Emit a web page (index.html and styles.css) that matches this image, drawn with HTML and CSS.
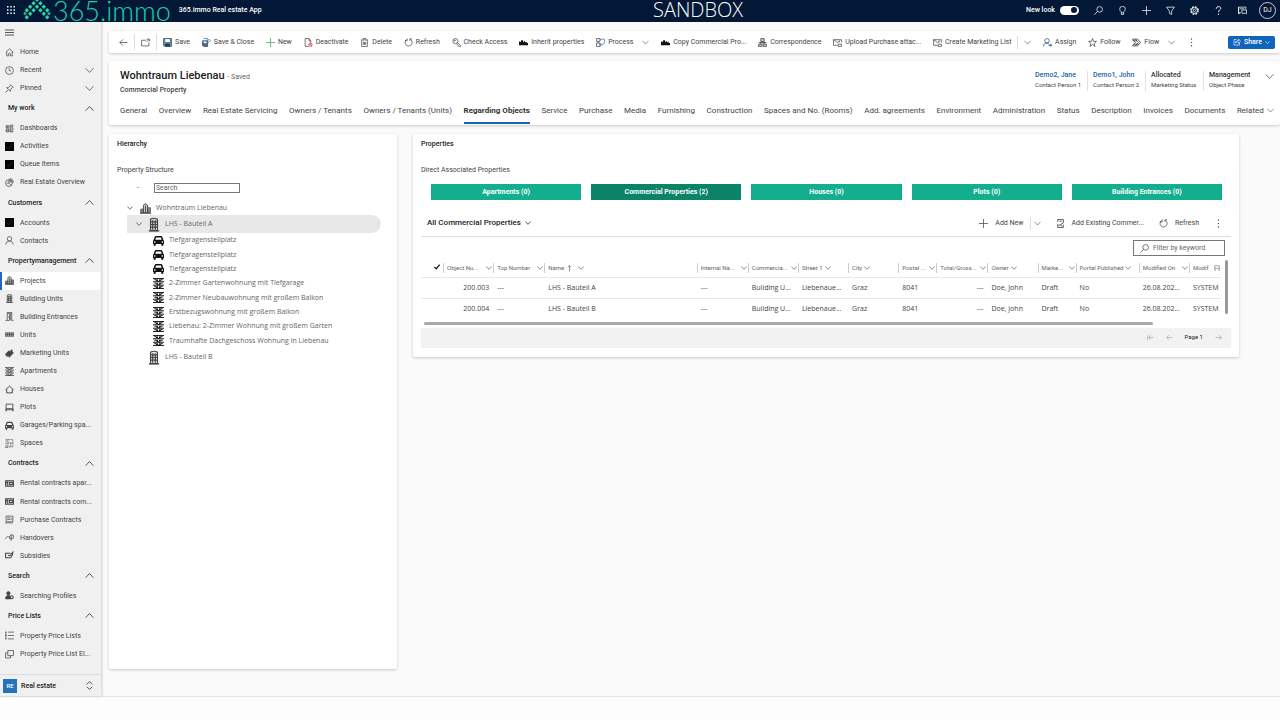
FILE: index.html
```html
<!DOCTYPE html>
<html lang="en">
<head>
<meta charset="utf-8">
<title>365.immo Real estate App</title>
<link rel="stylesheet" href="styles.css">
</head>
<body>
<svg class="sprite" aria-hidden="true">
  <symbol id="waffle" viewBox="0 0 16 16"><g fill="currentColor" stroke="none"><path d="M0 0h3v3H0zM6.500 0h3v3h-3zM13 0h3v3h-3zM0 6.500h3v3H0zM6.500 6.500h3v3h-3zM13 6.500h3v3h-3zM0 13h3v3H0zM6.500 13h3v3h-3zM13 13h3v3h-3z"/></g></symbol>
  <symbol id="menu" viewBox="0 0 16 16"><path d="M0 3.500h16M0 8h16M0 12.500h16"/></symbol>
  <symbol id="home" viewBox="0 0 16 16"><path d="M1.500 7.500 8 1.500l6.500 6M3 6.500V14h3.500v-3.500a1.500 1.500 0 0 1 3 0V14H13V6.500"/></symbol>
  <symbol id="clock" viewBox="0 0 16 16"><circle cx="8" cy="8" r="7"/><path d="M7.500 3.500v5h3.500"/></symbol>
  <symbol id="pin" viewBox="0 0 16 16"><path d="m10 1.500 4.500 4.500-1.500.500-3 3-.500 3.500-6.500-6.500 3.500-.500 3-3zM5.500 10.500l-4.500 4.500"/></symbol>
  <symbol id="down" viewBox="0 0 16 16"><path d="m1 4 7 7.500L15 4"/></symbol>
  <symbol id="up" viewBox="0 0 16 16"><path d="m1 12 7-7.500 7 7.500"/></symbol>
  <symbol id="updown" viewBox="0 0 16 16"><path d="m3 6 5-5 5 5M3 10l5 5 5-5"/></symbol>
  <symbol id="dash" viewBox="0 0 16 16"><path d="M2 3h5v4H2zM9 2h5v3H9zM9 7h5v7H9zM2 9h5v5H2zM4 3v4M11 9v5M2 12h5"/></symbol>
  <symbol id="black" viewBox="0 0 16 16"><path d="M0 0h16v16H0z" fill="#050505" stroke="none"/><path d="m3 9 3 3 7-8" stroke="#333"/></symbol>
  <symbol id="pie" viewBox="0 0 16 16"><circle cx="7" cy="9" r="6"/><path d="M7 9V3M7 9l4 4M9 1a6.500 6.500 0 0 1 6 6H9zM3 9h4"/></symbol>
  <symbol id="person" viewBox="0 0 16 16"><circle cx="8" cy="5" r="4"/><path d="M1.500 15c0-8 13-8 13 0"/></symbol>
  <symbol id="city" viewBox="0 0 16 16"><path fill="currentColor" fill-opacity=".3" d="M1 9h4v5H1zM5 3l3-2 3 2v11H5zM11 7h4v7h-4z"/><path d="M0 15h16M8 4v10M3 10v4M13 8v6"/></symbol>
  <symbol id="tower" viewBox="0 0 16 16"><path fill="currentColor" fill-opacity=".15" d="M4 2c2-1.500 6-1.500 8 0v13H4z"/><path d="M6.500 3v11M9.500 3v11M4 5h8M4 8h8M4 11h8M2 15.300h12"/></symbol>
  <symbol id="door" viewBox="0 0 16 16"><path d="M1 15h3V1h8v14h3M4 2l4 1v12H4M10 1v14M6 8v2"/></symbol>
  <symbol id="units" viewBox="0 0 16 16"><path fill="currentColor" fill-opacity=".3" d="M0 5h16v6H0zM4 5v6M8 5v6M12 5v6M0 8h16"/></symbol>
  <symbol id="tag" viewBox="0 0 16 16"><path fill="currentColor" d="m1 9 6-6 2 2 3-4 1 4 2 2-6 6-1 2-2-3-3 1z"/></symbol>
  <symbol id="apart" viewBox="0 0 16 16"><path stroke-width="1.400" d="M0 .8h16M0 5.500h16M0 10.500h16M0 15.200h16M2 2.500h3v2M6.500 2v3h3V2M11 4.500v-2h3M2 7.500h3v2M6.500 7v3h3V7M11 9.500v-2h3M2 12.500h3v2M6.500 12v3h3v-3M11 14.500v-2h3"/></symbol>
  <symbol id="house" viewBox="0 0 16 16"><path stroke-width="1.700" d="M1 8.500 8 2l7 6.500M3 7.500V14h10V7.500"/></symbol>
  <symbol id="plot" viewBox="0 0 16 16"><path stroke-width="1.500" d="M2 2h12v8H2zM2 10v5M14 10v5M0 12h16"/></symbol>
  <symbol id="car" viewBox="0 0 16 16"><path stroke="none" fill="currentColor" fill-rule="evenodd" d="M4 1.500h8l1.500 1L15 7l1 1.500V13h-1v2.500h-3V13H4v2.500H1V13H0V8.500L1 7l1.500-4.500zM4.500 3.500 3.300 7h9.400l-1.200-3.500zM2.500 9a1.200 1.200 0 1 0 .1 2.400A1.200 1.200 0 0 0 2.500 9zm11 0a1.200 1.200 0 1 0 .1 2.400A1.200 1.200 0 0 0 13.500 9z"/></symbol>
  <symbol id="spaces" viewBox="0 0 16 16"><path d="M2 1h12v13H2zM5 1v13M5 7h9M10 7v7M0 15h5" stroke-dasharray="2 1"/></symbol>
  <symbol id="rent" viewBox="0 0 16 16"><path stroke-width="1.800" d="M1 3h14v10H1zM5 3v10M2 6h2M2 9h2M8 6h5v4H8z"/></symbol>
  <symbol id="purchase" viewBox="0 0 16 16"><path d="M2 2h12v10H2zM4 5h5M4 8h5M11 5v4M0 14h14"/></symbol>
  <symbol id="handover" viewBox="0 0 16 16"><path d="M0 11c3-5 5-5 8-4l3-4 4 1v5l-4 1v4M8 7v3h4M11 3v7"/></symbol>
  <symbol id="subsidy" viewBox="0 0 16 16"><path stroke-width="1.800" d="M5 4H1v8h9l3-5M5 8h4l5-6-1 6M5 4h5"/></symbol>
  <symbol id="searcher" viewBox="0 0 16 16"><circle cx="6" cy="4" r="3" fill="currentColor"/><path fill="currentColor" d="M1 14c0-8 9-8 9-2v2z"/><circle cx="12" cy="11" r="2.500" stroke-width="2"/></symbol>
  <symbol id="list" viewBox="0 0 16 16"><path d="M0 2h3M0 8h3M0 14h3M5 2h11M5 8h11M5 14h11M1.500 2v12"/></symbol>
  <symbol id="copy" viewBox="0 0 16 16"><path d="M5 1h10v9H5zM5 5H1v9h9v-4"/></symbol>
  <symbol id="back" viewBox="0 0 16 16"><path d="M15 8H1.500M7 2.500 1.500 8 7 13.500"/></symbol>
  <symbol id="forward" viewBox="0 0 16 16"><path d="M1 8h13.500M9 2.500 14.500 8 9 13.500"/></symbol>
  <symbol id="first" viewBox="0 0 16 16"><path d="M15 8H4M9 3 4 8l5 5M1.500 2v12"/></symbol>
  <symbol id="popout" viewBox="0 0 16 16"><path d="M9 4H1v10h13V8M10 2h5v4M15 2l-5 5"/></symbol>
  <symbol id="save" viewBox="0 0 16 16"><path fill="#5b8db8" d="M1 1h14v14H3l-2-2z"/><path fill="#fff" stroke="none" d="M4 2h8v5H4z"/><path fill="#26384b" stroke="none" d="M4 10h8v5H4z"/></symbol>
  <symbol id="saveclose" viewBox="0 0 16 16"><path fill="#4c6d8c" d="M1 5h9v10H3l-2-2z"/><path fill="#fff" stroke="none" d="M3 6h5v3H3z"/><path stroke="#2873bd" d="m8 7 5-5 2 2-5 5M3 1h7v4"/></symbol>
  <symbol id="plus" viewBox="0 0 16 16"><path d="M8 0v16M0 8h16"/></symbol>
  <symbol id="deact" viewBox="0 0 16 16"><path d="M8 15H2V1h7l3 4v4M9 1v4h3"/><path fill="#e23b4e" fill-opacity=".3" stroke="#e23b4e" d="M8.500 12a3 3 0 1 1 6 0 3 3 0 0 1-6 0zm1-2 4 4"/></symbol>
  <symbol id="trash" viewBox="0 0 16 16"><path d="M1.500 3.500h13M5.500 3V1h5v2M3 4v11h10V4M6 7v5M8 7v5M10 7v5"/></symbol>
  <symbol id="refresh" viewBox="0 0 16 16"><path d="M5 2.500a6.300 6.300 0 1 0 6-.200M5.500 1v4h-4M10.500 5V1.500h4"/></symbol>
  <symbol id="key" viewBox="0 0 16 16"><circle cx="6" cy="5.500" r="4.500"/><circle cx="5" cy="4.500" r="1"/><path d="m9 8 6 5v2h-3l-4-5"/></symbol>
  <symbol id="hands" viewBox="0 0 16 16"><path fill="#111" stroke="none" d="M0 6h2l1 2 1-4h3l1 4 2-3 1 3 2-2 1 3h2v4H0z"/></symbol>
  <symbol id="process" viewBox="0 0 16 16"><path d="M1 1h6v5H1zM1 9h6v6H1zM4 6v3M7 3h2"/><path stroke="#2b78c8" d="M9 2h6v7l-4 3M7 12h5M9 9l-2 3 2 3"/></symbol>
  <symbol id="corr" viewBox="0 0 16 16"><path fill="currentColor" fill-opacity=".3" d="M5 1h6v6H5zM1 11h6v4H1zM9 11h6v4H9zM3 11l3-4h4l3 4M1 8h14"/></symbol>
  <symbol id="mail" viewBox="0 0 16 16"><path d="M8 13H1V3h14v5M1 3l7 5 3-2M9 11h6v4H9zM11 4v4"/></symbol>
  <symbol id="assign" viewBox="0 0 16 16"><circle cx="7" cy="5" r="4"/><path d="M1 15c0-5 3-6 6-6 2 0 3 1 4 2"/><path stroke="#2b78c8" stroke-width="2" d="M10 13h5M13 11l2 2-2 2"/></symbol>
  <symbol id="star" viewBox="0 0 16 16"><path d="m8 1 2 5h5l-4 3.500 1.500 5.500L8 11.500 3.500 15 5 9.500 1 6h5z"/></symbol>
  <symbol id="flow" viewBox="0 0 16 16"><path stroke-width="1.500" d="M1 2h9l5 6-5 6H1l5-6zM1 5h8M3 11h9M6 2l5 6-5 6"/></symbol>
  <symbol id="dots" viewBox="0 0 16 16"><path fill="currentColor" stroke="none" d="M7 1h2v2H7zM7 7h2v2H7zM7 13h2v2H7z"/></symbol>
  <symbol id="share" viewBox="0 0 16 16"><path d="M7 3H2v11h11v-4M5 10c0-4 3-5 6-5V2l4 4.500-4 4V8C8 8 6 8 5 10z"/></symbol>
  <symbol id="search" viewBox="0 0 16 16"><circle cx="10" cy="6" r="5"/><path d="m6.500 9.500-6 6"/></symbol>
  <symbol id="bulb" viewBox="0 0 16 16"><path d="M6 12C6 9 3 9 3 5.500a5 5 0 0 1 10 0C13 9 10 9 10 12zM6 15h4M6 12v3M10 12v3"/></symbol>
  <symbol id="filter" viewBox="0 0 16 16"><path d="M1 2h14L10 9v6l-4-2V9z"/></symbol>
  <symbol id="gear" viewBox="0 0 16 16"><circle cx="8" cy="8" r="6.500" stroke-width="2.400" stroke-dasharray="3.300 1.800"/><circle cx="8" cy="8" r="5"/><circle cx="8" cy="8" r="2"/></symbol>
  <symbol id="help" viewBox="0 0 16 16"><path stroke-width="1.600" d="M4 5c0-5 8-5 8-1 0 3-4 3-4 7M8 13.500V16"/></symbol>
  <symbol id="chat" viewBox="0 0 16 16"><path d="M5 12H1V2h13v4M1 2v12l3-2M7 7h8v7l-2-1H7zM3 5h8"/></symbol>
  <symbol id="check" viewBox="0 0 16 16"><path stroke-width="3.500" d="m1 8 5 5 9-11"/></symbol>
  <symbol id="sort" viewBox="0 0 16 16"><path stroke-width="1.500" d="M8 15V1M4 5l4-4 4 4"/></symbol>
  <symbol id="existing" viewBox="0 0 16 16"><path stroke-width="1.500" d="M3 5V1h10v6L4 12M3 9v6h10v-5M6 4h4M8 12h3"/></symbol>
  <symbol id="cols" viewBox="0 0 16 16"><path stroke-width="1.500" d="M2 14V2h12v12M2 9h12M2 14h3M11 14h3"/></symbol>
  <symbol id="roof" viewBox="0 0 28 22"><path fill="#25d9a8" stroke="none" d="M14-1.500l2.200 2.200L14 2.900 11.800.7zM10.600 2l2.200 2.200-2.200 2.200-2.200-2.200zM17.400 2l2.200 2.200-2.200 2.200-2.200-2.200zM14 5.500l2.200 2.200L14 9.900l-2.200-2.200zM7.200 5.500l2.200 2.200-2.200 2.200L5 7.700zM20.800 5.500 23 7.700l-2.200 2.200-2.200-2.200zM10.600 9l2.200 2.200-2.200 2.200-2.200-2.200zM17.400 9l2.200 2.200-2.200 2.200-2.200-2.200zM3.800 9 6 11.200l-2.200 2.200-2.200-2.200zM24.200 9l2.200 2.200-2.200 2.200-2.200-2.200zM7.200 12.500l2.200 2.200-2.200 2.200L5 14.700zM20.800 12.500l2.200 2.200-2.200 2.200-2.200-2.200zM3.800 16 6 18.200l-2.200 2.200-2.200-2.200zM24.200 16l2.200 2.200-2.200 2.200-2.200-2.200z"/><path fill="#1bb89a" stroke="none" d="M2 12.500l1.800 2L2 16.500l-1.800-2zM26 12.500l1.800 2-1.800 2-1.800-2z"/></symbol>
</svg>

<header class="topbar">
  <button class="plain" aria-label="App launcher"><svg class="ic"><use href="#waffle"/></svg></button>
  <a class="logo" href="#"><svg class="roof"><use href="#roof"/></svg><span>365.immo</span></a>
  <span class="app-name">365.immo Real estate App</span>
  <span class="env">SANDBOX</span>
  <div class="top-tools">
    <label class="look">New look <input type="checkbox" class="switch" checked></label>
    <button class="plain" aria-label="Search"><svg class="ic"><use href="#search"/></svg></button>
    <button class="plain" aria-label="Insights"><svg class="ic"><use href="#bulb"/></svg></button>
    <button class="plain" aria-label="Create"><svg class="ic"><use href="#plus"/></svg></button>
    <button class="plain" aria-label="Filter"><svg class="ic"><use href="#filter"/></svg></button>
    <button class="plain" aria-label="Settings"><svg class="ic"><use href="#gear"/></svg></button>
    <button class="plain" aria-label="Help"><svg class="ic"><use href="#help"/></svg></button>
    <button class="plain" aria-label="Assistant"><svg class="ic"><use href="#chat"/></svg></button>
    <button class="avatar">DJ</button>
  </div>
</header>

<div class="shell">
  <aside class="sidebar">
    <button class="plain menu-btn" aria-label="Menu"><svg class="ic wide"><use href="#menu"/></svg></button>
    <nav class="nav">
      <a class="item" href="#"><svg class="ic"><use href="#home"/></svg>Home</a>
      <a class="item" href="#"><svg class="ic"><use href="#clock"/></svg>Recent<svg class="ic chev"><use href="#down"/></svg></a>
      <a class="item" href="#"><svg class="ic"><use href="#pin"/></svg>Pinned<svg class="ic chev"><use href="#down"/></svg></a>
      <button class="group">My work<svg class="ic chev"><use href="#up"/></svg></button>
      <a class="item" href="#"><svg class="ic"><use href="#dash"/></svg>Dashboards</a>
      <a class="item" href="#"><svg class="ic"><use href="#black"/></svg>Activities</a>
      <a class="item" href="#"><svg class="ic"><use href="#black"/></svg>Queue Items</a>
      <a class="item" href="#"><svg class="ic"><use href="#pie"/></svg>Real Estate Overview</a>
      <button class="group">Customers<svg class="ic chev"><use href="#up"/></svg></button>
      <a class="item" href="#"><svg class="ic"><use href="#black"/></svg>Accounts</a>
      <a class="item" href="#"><svg class="ic"><use href="#person"/></svg>Contacts</a>
      <button class="group">Propertymanagement<svg class="ic chev"><use href="#up"/></svg></button>
      <a class="item active" href="#"><svg class="ic"><use href="#city"/></svg>Projects</a>
      <a class="item" href="#"><svg class="ic"><use href="#tower"/></svg>Building Units</a>
      <a class="item" href="#"><svg class="ic"><use href="#door"/></svg>Building Entrances</a>
      <a class="item" href="#"><svg class="ic"><use href="#units"/></svg>Units</a>
      <a class="item" href="#"><svg class="ic"><use href="#tag"/></svg>Marketing Units</a>
      <a class="item" href="#"><svg class="ic"><use href="#apart"/></svg>Apartments</a>
      <a class="item" href="#"><svg class="ic"><use href="#house"/></svg>Houses</a>
      <a class="item" href="#"><svg class="ic"><use href="#plot"/></svg>Plots</a>
      <a class="item" href="#"><svg class="ic"><use href="#car"/></svg>Garages/Parking spa...</a>
      <a class="item" href="#"><svg class="ic"><use href="#spaces"/></svg>Spaces</a>
      <button class="group">Contracts<svg class="ic chev"><use href="#up"/></svg></button>
      <a class="item" href="#"><svg class="ic"><use href="#rent"/></svg>Rental contracts apar...</a>
      <a class="item" href="#"><svg class="ic"><use href="#rent"/></svg>Rental contracts com...</a>
      <a class="item" href="#"><svg class="ic"><use href="#purchase"/></svg>Purchase Contracts</a>
      <a class="item" href="#"><svg class="ic"><use href="#handover"/></svg>Handovers</a>
      <a class="item" href="#"><svg class="ic"><use href="#subsidy"/></svg>Subsidies</a>
      <button class="group">Search<svg class="ic chev"><use href="#up"/></svg></button>
      <a class="item" href="#"><svg class="ic"><use href="#searcher"/></svg>Searching Profiles</a>
      <button class="group">Price Lists<svg class="ic chev"><use href="#up"/></svg></button>
      <a class="item" href="#"><svg class="ic"><use href="#list"/></svg>Property Price Lists</a>
      <a class="item" href="#"><svg class="ic"><use href="#copy"/></svg>Property Price List El...</a>
    </nav>
    <button class="area"><span class="area-badge">RE</span>Real estate<svg class="ic chev"><use href="#updown"/></svg></button>
  </aside>

  <main class="main">
    <div class="card commands">
      <div class="lead">
        <button class="cmd" aria-label="Back"><svg class="ic"><use href="#back"/></svg></button>
        <span class="sep"></span>
        <button class="cmd" aria-label="Open in new window"><svg class="ic"><use href="#popout"/></svg></button>
        <span class="sep"></span>
      </div>
      <div class="cmd-list">
        <button class="cmd"><svg class="ic"><use href="#save"/></svg>Save</button>
        <button class="cmd"><svg class="ic"><use href="#saveclose"/></svg>Save &amp; Close</button>
        <button class="cmd"><svg class="ic green"><use href="#plus"/></svg>New</button>
        <button class="cmd"><svg class="ic"><use href="#deact"/></svg>Deactivate</button>
        <button class="cmd"><svg class="ic"><use href="#trash"/></svg>Delete</button>
        <button class="cmd"><svg class="ic"><use href="#refresh"/></svg>Refresh</button>
        <button class="cmd"><svg class="ic"><use href="#key"/></svg>Check Access</button>
        <button class="cmd"><svg class="ic"><use href="#hands"/></svg>Inherit properties</button>
        <button class="cmd"><svg class="ic"><use href="#process"/></svg>Process<svg class="ic small drop"><use href="#down"/></svg></button>
        <button class="cmd"><svg class="ic"><use href="#hands"/></svg>Copy Commercial Pro...</button>
        <button class="cmd"><svg class="ic"><use href="#corr"/></svg>Correspondence</button>
        <button class="cmd"><svg class="ic"><use href="#mail"/></svg>Upload Purchase attac...</button>
        <button class="cmd"><svg class="ic"><use href="#mail"/></svg>Create Marketing List</button>
        <button class="cmd split" aria-label="More lists"><svg class="ic small"><use href="#down"/></svg></button>
        <button class="cmd"><svg class="ic"><use href="#assign"/></svg>Assign</button>
        <button class="cmd"><svg class="ic"><use href="#star"/></svg>Follow</button>
        <button class="cmd"><svg class="ic"><use href="#flow"/></svg>Flow<svg class="ic small drop"><use href="#down"/></svg></button>
        <button class="cmd" aria-label="More commands"><svg class="ic"><use href="#dots"/></svg></button>
      </div>
      <button class="share"><svg class="ic"><use href="#share"/></svg>Share<svg class="ic tiny"><use href="#down"/></svg></button>
    </div>

    <section class="card record">
      <div class="record-head">
        <div>
          <h1>Wohntraum Liebenau <small>- Saved</small></h1>
          <p class="entity">Commercial Property</p>
        </div>
        <dl class="facts">
          <div><dt>Contact Person 1</dt><dd><a href="#">Demo2, Jane</a></dd></div>
          <div><dt>Contact Person 2</dt><dd><a href="#">Demo1, John</a></dd></div>
          <div><dt>Marketing Status</dt><dd>Allocated</dd></div>
          <div><dt>Object Phase</dt><dd>Management</dd></div>
        </dl>
        <button class="plain expand" aria-label="Expand header"><svg class="ic"><use href="#down"/></svg></button>
      </div>
      <div class="tabs" role="tablist">
        <button role="tab">General</button>
        <button role="tab">Overview</button>
        <button role="tab">Real Estate Servicing</button>
        <button role="tab">Owners / Tenants</button>
        <button role="tab">Owners / Tenants (Units)</button>
        <button role="tab" class="current" aria-selected="true">Regarding Objects</button>
        <button role="tab">Service</button>
        <button role="tab">Purchase</button>
        <button role="tab">Media</button>
        <button role="tab">Furnishing</button>
        <button role="tab">Construction</button>
        <button role="tab">Spaces and No. (Rooms)</button>
        <button role="tab">Add. agreements</button>
        <button role="tab">Environment</button>
        <button role="tab">Administration</button>
        <button role="tab">Status</button>
        <button role="tab">Description</button>
        <button role="tab">Invoices</button>
        <button role="tab">Documents</button>
        <button role="tab">Related <svg class="ic small"><use href="#down"/></svg></button>
      </div>
    </section>

    <div class="panels">
      <section class="card panel">
        <h2>Hierarchy</h2>
        <p class="sub">Property Structure</p>
        <div class="tree-search"><span>-</span><input type="text" placeholder="Search" aria-label="Search hierarchy"></div>
        <div class="tree">
          <div class="node root"><svg class="ic tiny"><use href="#down"/></svg><svg class="ic big"><use href="#city"/></svg>Wohntraum Liebenau</div>
          <div class="node branch selected"><svg class="ic tiny"><use href="#down"/></svg><svg class="ic tall"><use href="#tower"/></svg>LHS - Bauteil A</div>
          <ul class="leaves">
            <li><svg class="ic big"><use href="#car"/></svg>Tiefgaragenstellplatz</li>
            <li><svg class="ic big"><use href="#car"/></svg>Tiefgaragenstellplatz</li>
            <li><svg class="ic big"><use href="#car"/></svg>Tiefgaragenstellplatz</li>
            <li><svg class="ic big"><use href="#apart"/></svg>2-Zimmer Gartenwohnung mit Tiefgarage</li>
            <li><svg class="ic big"><use href="#apart"/></svg>2-Zimmer Neubauwohnung mit großem Balkon</li>
            <li><svg class="ic big"><use href="#apart"/></svg>Erstbezugswohnung mit großem Balkon</li>
            <li><svg class="ic big"><use href="#apart"/></svg>Liebenau: 2-Zimmer Wohnung mit großem Garten</li>
            <li><svg class="ic big"><use href="#apart"/></svg>Traumhafte Dachgeschoss Wohnung in Liebenau</li>
          </ul>
          <div class="node branch"><span class="ic tiny"></span><svg class="ic tall"><use href="#tower"/></svg>LHS - Bauteil B</div>
        </div>
      </section>

      <section class="card panel props">
        <h2>Properties</h2>
        <p class="sub">Direct Associated Properties</p>
        <div class="kinds">
          <button>Apartments (0)</button>
          <button class="chosen">Commercial Properties (2)</button>
          <button>Houses (0)</button>
          <button>Plots (0)</button>
          <button>Building Entrances (0)</button>
        </div>
        <div class="grid-bar">
          <button class="view">All Commercial Properties<svg class="ic tiny"><use href="#down"/></svg></button>
          <div class="grid-cmds">
            <button class="cmd"><svg class="ic"><use href="#plus"/></svg>Add New</button>
            <button class="cmd split" aria-label="More add options"><svg class="ic small"><use href="#down"/></svg></button>
            <button class="cmd"><svg class="ic"><use href="#existing"/></svg>Add Existing Commer...</button>
            <button class="cmd"><svg class="ic"><use href="#refresh"/></svg>Refresh</button>
            <button class="cmd" aria-label="More"><svg class="ic"><use href="#dots"/></svg></button>
          </div>
        </div>
        <label class="filter"><svg class="ic"><use href="#search"/></svg><input type="text" placeholder="Filter by keyword" aria-label="Filter by keyword"></label>
        <div class="table-wrap">
          <table>
            <colgroup><col class="w22"><col class="w50"><col class="w51"><col class="w152"><col class="w51"><col class="w50"><col class="w50"><col class="w50"><col class="w38"><col class="w51"><col class="w50"><col class="w38"><col class="w63"><col class="w50"><col class="w32"></colgroup>
            <thead>
              <tr>
                <th class="mark"><svg class="ic tiny"><use href="#check"/></svg></th>
                <th><div>Object Nu...<svg class="ic tiny end"><use href="#down"/></svg></div></th>
                <th><div>Top Number<svg class="ic tiny end"><use href="#down"/></svg></div></th>
                <th><div>Name<svg class="ic small"><use href="#sort"/></svg><svg class="ic tiny gap"><use href="#down"/></svg></div></th>
                <th><div>Internal Na...<svg class="ic tiny end"><use href="#down"/></svg></div></th>
                <th><div>Commercia...<svg class="ic tiny end"><use href="#down"/></svg></div></th>
                <th><div>Street 1<svg class="ic tiny"><use href="#down"/></svg></div></th>
                <th><div>City<svg class="ic tiny"><use href="#down"/></svg></div></th>
                <th><div>Postal ...<svg class="ic tiny end"><use href="#down"/></svg></div></th>
                <th><div>Total/Gross...<svg class="ic tiny end"><use href="#down"/></svg></div></th>
                <th><div>Owner<svg class="ic tiny"><use href="#down"/></svg></div></th>
                <th><div>Marke...<svg class="ic tiny end"><use href="#down"/></svg></div></th>
                <th><div>Portal Published<svg class="ic tiny"><use href="#down"/></svg></div></th>
                <th><div>Modified On<svg class="ic tiny end"><use href="#down"/></svg></div></th>
                <th><div>Modif<svg class="ic tiny end"><use href="#cols"/></svg></div></th>
              </tr>
            </thead>
            <tbody>
              <tr><td></td><td class="num">200.003</td><td>---</td><td>LHS - Bauteil A</td><td>---</td><td>Building U...</td><td>Liebenaue...</td><td>Graz</td><td>8041</td><td class="num">---</td><td>Doe, John</td><td>Draft</td><td>No</td><td>26.08.202...</td><td>SYSTEM</td></tr>
              <tr><td></td><td class="num">200.004</td><td>---</td><td>LHS - Bauteil B</td><td>---</td><td>Building U...</td><td>Liebenaue...</td><td>Graz</td><td>8041</td><td class="num">---</td><td>Doe, John</td><td>Draft</td><td>No</td><td>26.08.202...</td><td>SYSTEM</td></tr>
            </tbody>
          </table>
          <div class="vbar"></div>
        </div>
        <div class="hbar"></div>
        <div class="pager">
          <button class="plain" aria-label="First page"><svg class="ic small"><use href="#first"/></svg></button>
          <button class="plain" aria-label="Previous page"><svg class="ic small"><use href="#back"/></svg></button>
          <span>Page 1</span>
          <button class="plain" aria-label="Next page"><svg class="ic small"><use href="#forward"/></svg></button>
        </div>
      </section>
    </div>
  </main>
</div>
</body>
</html>
```
FILE: styles.css
```css
* { box-sizing: border-box; }
body {
  margin: 0;
  min-height: 100vh;
  display: flex;
  flex-direction: column;
  background: #fdfdfd;
  color: #444;
  font: 7px/10px Roboto, "Open Sans", sans-serif;
}
button, input { font: inherit; color: inherit; }
button { background: none; border: 0; padding: 0; display: flex; align-items: center; white-space: nowrap; }
a { color: inherit; text-decoration: none; }
h1, h2, p, dl, dd, ul { margin: 0; padding: 0; }
.sprite { position: absolute; width: 0; height: 0; }
.ic { width: 9px; height: 9px; flex: none; fill: none; stroke: currentColor; stroke-width: 1.3; }
.ic.wide { stroke-width: 1.6; }
.ic.small { width: 7px; height: 7px; }
.ic.tiny { width: 6px; height: 6px; stroke-width: 2; }
.ic.big { width: 11px; height: 11px; }
.ic.tall { width: 14px; height: 15px; }
.ic.green { color: #35a85a; }

.topbar { height: 22px; flex: none; display: flex; align-items: center; background: #021836; color: #fff; padding: 0 4px 2px 7px; position: relative; }
.topbar > .plain .ic { width: 8px; height: 8px; }
.logo { height: 22px; margin-left: 8px; display: flex; align-items: flex-start; gap: 2px; color: #1fcfb0; font: 300 27px/24px Lato, sans-serif; }
.roof { width: 28px; height: 22px; }
.app-name { margin-left: 8px; font-weight: 500; }
.env { position: absolute; left: 0; right: 0; top: 0; padding-left: 116px; text-align: center; font: 300 20px/20px "Open Sans", sans-serif; pointer-events: none; }
.top-tools { margin-left: auto; display: flex; align-items: center; gap: 15px; }
.look { display: flex; align-items: center; gap: 5px; font-weight: 500; }
.switch { appearance: none; margin: 0; width: 19px; height: 9px; border-radius: 5px; background: #fff; display: flex; align-items: center; justify-content: flex-end; padding: 0 2px; }
.switch::after { content: ""; width: 6px; height: 6px; border-radius: 50%; background: #021836; }
.avatar { width: 17px; height: 17px; margin-left: -3px; border: 1px solid #c9d0da; border-radius: 50%; justify-content: center; }

.shell { flex: 1; display: flex; margin-bottom: 23px; background: #fafafa; border-bottom: 1px solid #e4e4e4; }
.sidebar { width: 101px; flex: none; display: flex; flex-direction: column; background: #f0f0f0; box-shadow: 1px 0 3px #ccc; }
.menu-btn { height: 21px; padding-left: 5px; }
.nav { flex: 1; display: flex; flex-direction: column; justify-content: space-between; margin-bottom: 11px; }
.item { height: 18px; display: flex; align-items: center; gap: 6px; padding: 0 7px 0 5px; white-space: nowrap; }
.item.active { background: #fff; padding-left: 3px; border-left: 2px solid #2266c8; margin-right: 1px; }
.group { height: 22px; padding: 0 7px 0 8px; font-weight: 500; color: #222; }
.chev { margin-left: auto; }
.area { height: 22px; flex: none; border-top: 1px solid #ddd; padding: 0 7px 0 3px; gap: 4px; font-weight: 500; color: #222; }
.area-badge { width: 14px; height: 14px; background: #2473b8; color: #fff; font-size: 6px; line-height: 13px; text-align: center; }

.main { flex: 1; min-width: 0; display: flex; flex-direction: column; gap: 8px; padding: 9px 0 27px 8px; }
.card { background: #fff; border-radius: 2px; box-shadow: 0 1px 3px #c8c8c8; }
.commands { height: 22px; display: flex; align-items: center; padding: 0 5px 0 10px; }
.lead { display: flex; align-items: center; gap: 6px; margin-right: 6px; }
.cmd-list { flex: 1; display: flex; align-items: center; justify-content: space-between; }
.cmd { gap: 3px; }
.drop { margin-left: 6px; }
.sep { width: 1px; height: 16px; background: #ddd; }
.cmd.split { border-left: 1px solid #ddd; height: 13px; padding-left: 6px; margin-left: -6px; }
.share { height: 13px; margin-left: 32px; padding: 0 5px; gap: 3px; border-radius: 2px; background: #0f64bd; color: #fff; font-weight: 500; }
.share .ic { width: 8px; height: 8px; }
.share .tiny { width: 5px; height: 5px; }

.record { height: 64px; padding: 8px 6px 0 11px; }
.record-head { display: flex; align-items: flex-start; }
h1 { font-size: 11px; line-height: 14px; font-weight: 500; color: #222; }
h1 small { font-size: 7px; font-weight: 400; color: #666; }
.entity { line-height: 12px; font-weight: 500; }
.facts { margin-left: auto; display: flex; }
.facts div { width: 58px; height: 20px; margin-top: 2px; padding-left: 5px; border-left: 1px solid #e2e2e2; display: flex; flex-direction: column-reverse; justify-content: flex-end; }
.facts div:first-child { border-left-color: transparent; }
.facts div:last-child { width: 62px; }
.facts dd { line-height: 9px; font-weight: 500; white-space: nowrap; color: #333; }
.facts a { color: #2263a8; }
.facts dt { font-size: 6px; line-height: 10px; white-space: nowrap; }
.expand { margin: 3px 0 0; }
.tabs { display: flex; justify-content: space-between; margin-top: 1px; }
.tabs button { font-size: 8px; line-height: 11px; height: 27px; gap: 3px; padding-top: 1px; border-bottom: 2px solid transparent; }
.tabs .current { font-weight: 700; color: #333; border-bottom-color: #1b62b5; }

.panels { flex: 1; display: grid; grid-template-columns: 288fr 826fr; gap: 16px; align-items: start; margin: 1px 41px 0 0; }
.panel { padding: 4px 8px 9px; height: 100%; }
.panel.props { height: auto; }
h2 { font-size: 7px; line-height: 12px; font-weight: 500; color: #222; }
.sub { margin-top: 14px; line-height: 12px; }
.tree-search { display: flex; align-items: center; gap: 15px; margin-top: 7px; padding-left: 20px; }
.tree-search input { width: 86px; height: 10px; border: 1px solid #777; padding: 0 1px; }
.tree { margin-top: 8px; color: #666; font-family: "Open Sans", sans-serif; }
.tree .ic { color: #444; }
.node { display: flex; align-items: center; height: 18px; }
.node.root { height: 14px; padding-left: 10px; gap: 5px; }
.root .big { margin-left: 2px; }
.branch { margin: 0 8px 0 10px; padding-left: 9px; gap: 4px; }
.branch .tall { margin-left: 1px; }
.node.selected { background: #e8e8e8; border-radius: 0 9px 9px 0; }
.leaves { list-style: none; display: grid; grid-auto-rows: 1fr; min-height: 115px; padding-left: 36px; }
.leaves li { display: flex; align-items: center; gap: 5px; }
.leaves .ic { color: #111; }

.kinds { display: grid; grid-template-columns: repeat(5, 1fr); gap: 10px; margin: 8px 9px 0 10px; }
.kinds button { height: 16px; justify-content: center; background: #12ae8d; color: #fff; font-weight: 700; }
.kinds .chosen { background: #0a8368; }
.grid-bar { display: flex; align-items: center; height: 29px; margin-top: 8px; padding: 2px 0 0 6px; border-bottom: 1px solid #ddd; }
.view { font-size: 8px; font-weight: 500; gap: 4px; color: #222; }
.grid-cmds { margin-left: auto; margin-right: 8px; display: flex; align-items: center; gap: 15px; }
.grid-cmds .cmd { gap: 7px; }
.grid-cmds .split { margin-left: -9px; padding-left: 3px; }
.filter { display: flex; align-items: center; gap: 4px; width: 92px; height: 16px; margin: 3px 6px 0 auto; border: 1px solid #777; padding: 0 6px; }
.filter input { width: 100%; min-width: 0; border: 0; padding: 0; outline: 0; background: none; }
input::placeholder { color: #666; opacity: 1; }
.table-wrap { display: flex; gap: 4px; margin-top: 4px; padding-right: 3px; }
table { flex: 1; width: 100%; min-width: 0; table-layout: fixed; border-collapse: collapse; }
.w22 { width: 22px; } .w32 { width: 32px; } .w38 { width: 38px; } .w50 { width: 50px; } .w51 { width: 51px; } .w63 { width: 63px; } .w152 { width: 152px; }
th { height: 17px; padding: 0; font-size: 6px; font-weight: 400; text-align: left; color: #666; }
th div { display: flex; align-items: center; gap: 2px; height: 10px; border-left: 1px solid #ccc; padding: 0 1px 0 3px; white-space: nowrap; }
.mark { color: #111; text-align: right; }
.mark .ic { margin-right: 3px; }
.end { margin-left: auto; }
.gap { margin-left: 3px; }
td { height: 21px; padding: 0 2px 0 4px; font-family: "Open Sans", sans-serif; white-space: nowrap; border-top: 1px solid #e8e8e8; }
td:last-child { padding-right: 0; }
td.num { text-align: right; padding-right: 4px; }
.vbar { width: 3px; height: 54px; background: #999; border-radius: 2px; }
.hbar { width: 90%; height: 3px; margin: 3px 0 0 3px; background: #aaa; border-radius: 2px; }
.pager { display: flex; align-items: center; justify-content: flex-end; gap: 12px; height: 20px; margin-top: 3px; padding: 0 9px 2px 0; background: #f2f2f2; font-size: 6px; color: #222; }
.pager .ic { color: #999; }
```
